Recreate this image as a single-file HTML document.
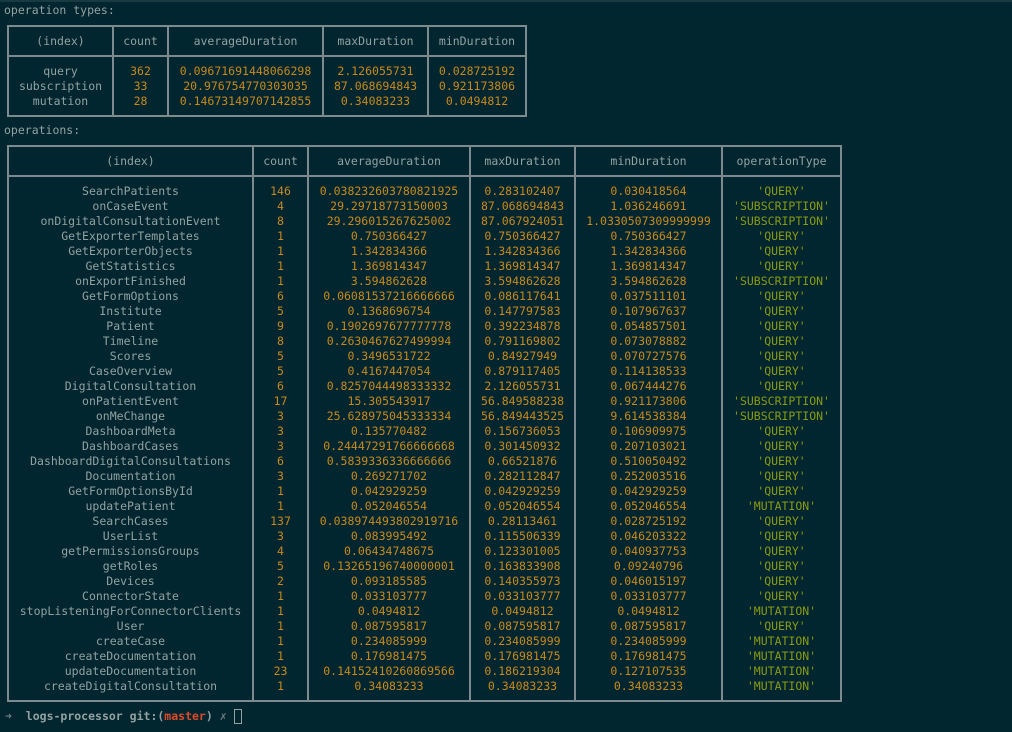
<!DOCTYPE html>
<html><head><meta charset="utf-8"><style>
html,body{margin:0;padding:0;background:#02262f;width:1012px;height:732px;overflow:hidden}
body{font-family:"DejaVu Sans Mono","Liberation Mono",monospace;font-size:11.5px;color:#93a1a1;position:relative}
.t{position:absolute;white-space:pre;line-height:15px}
.box{position:absolute;border:2px solid #7d8b8e;box-sizing:border-box}
.v{position:absolute;width:2px;background:#7d8b8e}
.h{position:absolute;height:2px;background:#7d8b8e}
table{position:absolute;border-collapse:collapse;table-layout:fixed}
td{padding:0;text-align:center;line-height:15px;height:15px;white-space:pre;overflow:visible}
.o{color:#c8891c}
.g{color:#8a9a12}
</style></head><body>
<div style="position:absolute;left:0;top:0;width:1012px;height:2px;background:#1a3a42"></div>
<div class="t" style="left:4px;top:3px">operation types:</div>
<div class="box" style="left:7px;top:25px;width:520px;height:92px"></div>
<div class="h" style="left:7px;top:55px;width:520px"></div>
<div class="v" style="left:112px;top:25px;height:92px"></div>
<div class="v" style="left:167px;top:25px;height:92px"></div>
<div class="v" style="left:322px;top:25px;height:92px"></div>
<div class="v" style="left:427px;top:25px;height:92px"></div>
<table style="left:8px;top:34px;width:518px"><colgroup><col style="width:105px"><col style="width:55px"><col style="width:155px"><col style="width:105px"><col style="width:98px"></colgroup>
<tr><td>(index)</td><td>count</td><td>averageDuration</td><td>maxDuration</td><td>minDuration</td></tr></table>
<table style="left:8px;top:64px;width:518px"><colgroup><col style="width:105px"><col style="width:55px"><col style="width:155px"><col style="width:105px"><col style="width:98px"></colgroup>
<tr><td>query</td><td class="o">362</td><td class="o">0.09671691448066298</td><td class="o">2.126055731</td><td class="o">0.028725192</td></tr>
<tr><td>subscription</td><td class="o">33</td><td class="o">20.976754770303035</td><td class="o">87.068694843</td><td class="o">0.921173806</td></tr>
<tr><td>mutation</td><td class="o">28</td><td class="o">0.14673149707142855</td><td class="o">0.34083233</td><td class="o">0.0494812</td></tr>
</table>
<div class="t" style="left:4px;top:123px">operations:</div>
<div class="box" style="left:7px;top:145px;width:835px;height:557px"></div>
<div class="h" style="left:7px;top:175px;width:835px"></div>
<div class="v" style="left:252px;top:145px;height:557px"></div>
<div class="v" style="left:307px;top:145px;height:557px"></div>
<div class="v" style="left:469px;top:145px;height:557px"></div>
<div class="v" style="left:574px;top:145px;height:557px"></div>
<div class="v" style="left:721px;top:145px;height:557px"></div>
<table style="left:8px;top:154px;width:833px"><colgroup><col style="width:245px"><col style="width:55px"><col style="width:162px"><col style="width:105px"><col style="width:147px"><col style="width:119px"></colgroup>
<tr><td>(index)</td><td>count</td><td>averageDuration</td><td>maxDuration</td><td>minDuration</td><td>operationType</td></tr></table>
<table style="left:8px;top:184px;width:833px"><colgroup><col style="width:245px"><col style="width:55px"><col style="width:162px"><col style="width:105px"><col style="width:147px"><col style="width:119px"></colgroup>
<tr><td>SearchPatients</td><td class="o">146</td><td class="o">0.038232603780821925</td><td class="o">0.283102407</td><td class="o">0.030418564</td><td class="g">'QUERY'</td></tr>
<tr><td>onCaseEvent</td><td class="o">4</td><td class="o">29.29718773150003</td><td class="o">87.068694843</td><td class="o">1.036246691</td><td class="g">'SUBSCRIPTION'</td></tr>
<tr><td>onDigitalConsultationEvent</td><td class="o">8</td><td class="o">29.296015267625002</td><td class="o">87.067924051</td><td class="o">1.0330507309999999</td><td class="g">'SUBSCRIPTION'</td></tr>
<tr><td>GetExporterTemplates</td><td class="o">1</td><td class="o">0.750366427</td><td class="o">0.750366427</td><td class="o">0.750366427</td><td class="g">'QUERY'</td></tr>
<tr><td>GetExporterObjects</td><td class="o">1</td><td class="o">1.342834366</td><td class="o">1.342834366</td><td class="o">1.342834366</td><td class="g">'QUERY'</td></tr>
<tr><td>GetStatistics</td><td class="o">1</td><td class="o">1.369814347</td><td class="o">1.369814347</td><td class="o">1.369814347</td><td class="g">'QUERY'</td></tr>
<tr><td>onExportFinished</td><td class="o">1</td><td class="o">3.594862628</td><td class="o">3.594862628</td><td class="o">3.594862628</td><td class="g">'SUBSCRIPTION'</td></tr>
<tr><td>GetFormOptions</td><td class="o">6</td><td class="o">0.06081537216666666</td><td class="o">0.086117641</td><td class="o">0.037511101</td><td class="g">'QUERY'</td></tr>
<tr><td>Institute</td><td class="o">5</td><td class="o">0.1368696754</td><td class="o">0.147797583</td><td class="o">0.107967637</td><td class="g">'QUERY'</td></tr>
<tr><td>Patient</td><td class="o">9</td><td class="o">0.1902697677777778</td><td class="o">0.392234878</td><td class="o">0.054857501</td><td class="g">'QUERY'</td></tr>
<tr><td>Timeline</td><td class="o">8</td><td class="o">0.2630467627499994</td><td class="o">0.791169802</td><td class="o">0.073078882</td><td class="g">'QUERY'</td></tr>
<tr><td>Scores</td><td class="o">5</td><td class="o">0.3496531722</td><td class="o">0.84927949</td><td class="o">0.070727576</td><td class="g">'QUERY'</td></tr>
<tr><td>CaseOverview</td><td class="o">5</td><td class="o">0.4167447054</td><td class="o">0.879117405</td><td class="o">0.114138533</td><td class="g">'QUERY'</td></tr>
<tr><td>DigitalConsultation</td><td class="o">6</td><td class="o">0.8257044498333332</td><td class="o">2.126055731</td><td class="o">0.067444276</td><td class="g">'QUERY'</td></tr>
<tr><td>onPatientEvent</td><td class="o">17</td><td class="o">15.305543917</td><td class="o">56.849588238</td><td class="o">0.921173806</td><td class="g">'SUBSCRIPTION'</td></tr>
<tr><td>onMeChange</td><td class="o">3</td><td class="o">25.628975045333334</td><td class="o">56.849443525</td><td class="o">9.614538384</td><td class="g">'SUBSCRIPTION'</td></tr>
<tr><td>DashboardMeta</td><td class="o">3</td><td class="o">0.135770482</td><td class="o">0.156736053</td><td class="o">0.106909975</td><td class="g">'QUERY'</td></tr>
<tr><td>DashboardCases</td><td class="o">3</td><td class="o">0.24447291766666668</td><td class="o">0.301450932</td><td class="o">0.207103021</td><td class="g">'QUERY'</td></tr>
<tr><td>DashboardDigitalConsultations</td><td class="o">6</td><td class="o">0.5839336336666666</td><td class="o">0.66521876</td><td class="o">0.510050492</td><td class="g">'QUERY'</td></tr>
<tr><td>Documentation</td><td class="o">3</td><td class="o">0.269271702</td><td class="o">0.282112847</td><td class="o">0.252003516</td><td class="g">'QUERY'</td></tr>
<tr><td>GetFormOptionsById</td><td class="o">1</td><td class="o">0.042929259</td><td class="o">0.042929259</td><td class="o">0.042929259</td><td class="g">'QUERY'</td></tr>
<tr><td>updatePatient</td><td class="o">1</td><td class="o">0.052046554</td><td class="o">0.052046554</td><td class="o">0.052046554</td><td class="g">'MUTATION'</td></tr>
<tr><td>SearchCases</td><td class="o">137</td><td class="o">0.038974493802919716</td><td class="o">0.28113461</td><td class="o">0.028725192</td><td class="g">'QUERY'</td></tr>
<tr><td>UserList</td><td class="o">3</td><td class="o">0.083995492</td><td class="o">0.115506339</td><td class="o">0.046203322</td><td class="g">'QUERY'</td></tr>
<tr><td>getPermissionsGroups</td><td class="o">4</td><td class="o">0.06434748675</td><td class="o">0.123301005</td><td class="o">0.040937753</td><td class="g">'QUERY'</td></tr>
<tr><td>getRoles</td><td class="o">5</td><td class="o">0.13265196740000001</td><td class="o">0.163833908</td><td class="o">0.09240796</td><td class="g">'QUERY'</td></tr>
<tr><td>Devices</td><td class="o">2</td><td class="o">0.093185585</td><td class="o">0.140355973</td><td class="o">0.046015197</td><td class="g">'QUERY'</td></tr>
<tr><td>ConnectorState</td><td class="o">1</td><td class="o">0.033103777</td><td class="o">0.033103777</td><td class="o">0.033103777</td><td class="g">'QUERY'</td></tr>
<tr><td>stopListeningForConnectorClients</td><td class="o">1</td><td class="o">0.0494812</td><td class="o">0.0494812</td><td class="o">0.0494812</td><td class="g">'MUTATION'</td></tr>
<tr><td>User</td><td class="o">1</td><td class="o">0.087595817</td><td class="o">0.087595817</td><td class="o">0.087595817</td><td class="g">'QUERY'</td></tr>
<tr><td>createCase</td><td class="o">1</td><td class="o">0.234085999</td><td class="o">0.234085999</td><td class="o">0.234085999</td><td class="g">'MUTATION'</td></tr>
<tr><td>createDocumentation</td><td class="o">1</td><td class="o">0.176981475</td><td class="o">0.176981475</td><td class="o">0.176981475</td><td class="g">'MUTATION'</td></tr>
<tr><td>updateDocumentation</td><td class="o">23</td><td class="o">0.14152410260869566</td><td class="o">0.186219304</td><td class="o">0.127107535</td><td class="g">'MUTATION'</td></tr>
<tr><td>createDigitalConsultation</td><td class="o">1</td><td class="o">0.34083233</td><td class="o">0.34083233</td><td class="o">0.34083233</td><td class="g">'MUTATION'</td></tr>
</table>
<div class="t" style="left:5px;top:709px;font-weight:bold"><span style="color:#6f7f84;font-weight:normal">➜</span>  <span style="color:#93a1a1">logs-processor</span> <span style="color:#93a1a1">git:(</span><span style="color:#dc4a2a">master</span><span style="color:#93a1a1">)</span> <span style="color:#6f7f84;font-weight:normal">✗</span></div>
<div style="position:absolute;left:234px;top:709px;width:6px;height:13px;border:1px solid #93a1a1"></div>
</body></html>
